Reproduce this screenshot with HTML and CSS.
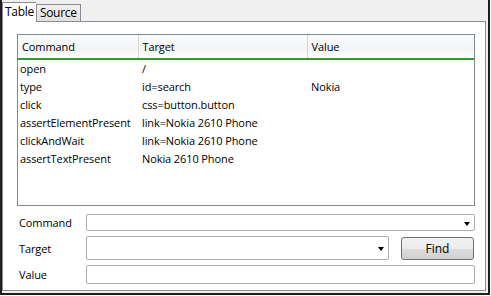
FILE: index.html
```html
<!DOCTYPE html>
<html lang="en">
<head>
    <meta charset="UTF-8">
    <title>Selenium IDE</title>
    <link rel="stylesheet" href="styles.css">
</head>
<body>
    <div class="frame">
        <div class="tabs">
            <div class="tab active">Table</div>
            <div class="tab">Source</div>
        </div>
        <div class="panel">
            <div class="grid">
                <table class="commands">
                    <thead>
                        <tr>
                            <th class="col-cmd">Command</th>
                            <th class="col-target">Target</th>
                            <th class="col-value">Value</th>
                        </tr>
                    </thead>
                    <tbody>
                        <tr><td>open</td><td>/</td><td></td></tr>
                        <tr><td>type</td><td>id=search</td><td>Nokia</td></tr>
                        <tr><td>click</td><td>css=button.button</td><td></td></tr>
                        <tr><td>assertElementPresent</td><td>link=Nokia 2610 Phone</td><td></td></tr>
                        <tr><td>clickAndWait</td><td>link=Nokia 2610 Phone</td><td></td></tr>
                        <tr><td>assertTextPresent</td><td>Nokia 2610 Phone</td><td></td></tr>
                    </tbody>
                </table>
            </div>
            <div class="editor">
                <div class="row row-cmd">
                    <label>Command</label>
                    <div class="field combo"><span class="arrow"></span></div>
                </div>
                <div class="row row-target">
                    <label>Target</label>
                    <div class="field combo"><span class="arrow"></span></div>
                    <button class="find">Find</button>
                </div>
                <div class="row row-value">
                    <label>Value</label>
                    <div class="field"></div>
                </div>
            </div>
        </div>
    </div>
</body>
</html>
```

FILE: styles.css
```css
* {
    box-sizing: border-box;
}

body {
    margin: 0;
    font-family: "Open Sans", "Liberation Sans", sans-serif;
    font-size: 11px;
    letter-spacing: -0.1px;
    color: #000;
    background: #fff;
}

.frame {
    width: 490px;
    height: 295px;
    background: #f0f0f0;
    border-left: 2px solid #1e1e1e;
    border-right: 2px solid #1e1e1e;
    border-bottom: 2px solid #1e1e1e;
    display: flex;
    flex-direction: column;
}

/* tab strip */
.tabs {
    display: flex;
    align-items: flex-end;
    height: 21px;
}

.tab {
    height: 17px;
    padding: 0 3px;
    line-height: 16px;
    border: 1px solid #898c95;
    border-bottom: none;
    background: linear-gradient(#f2f2f2, #e0e0e0);
    font-size: 12px;
    letter-spacing: -0.3px;
}

.tab.active {
    height: 20px;
    line-height: 18px;
    padding: 0 2px;
    background: #fff;
    position: relative;
    top: 1px;
    z-index: 1;
    border-right: none;
}

.panel {
    flex: 1;
    background: #fff;
    border: 1px solid #898c95;
    margin-right: 2px;
    margin-bottom: 2px;
    padding: 12px 10px 0 14px;
}

/* command grid */
.grid {
    height: 172px;
    border: 1px solid #828790;
    background: #fff;
}

.commands {
    border-collapse: collapse;
    width: 100%;
}

.commands th {
    height: 24px;
    font-weight: normal;
    text-align: left;
    padding: 0 4px;
    background: linear-gradient(#f9fafb 0%, #f3f4f5 60%, #fdfdfd 100%);
    border-right: 1px solid #d5d5d5;
    border-bottom: 2px solid #2f9a2f;
}

.commands th.col-value {
    border-right: none;
}

.commands .col-cmd {
    width: 120px;
}

.commands .col-target {
    width: 169px;
}

.commands td {
    height: 18px;
    padding: 0 2px;
    white-space: nowrap;
}

.commands td:nth-child(2),
.commands td:nth-child(3) {
    padding-left: 4px;
}

/* editor fields */
.editor {
    padding-top: 8px;
}

.row {
    display: flex;
    align-items: center;
    margin-bottom: 5px;
}

.row label {
    width: 69px;
    padding-left: 2px;
}

.field {
    flex: 1;
    height: 17px;
    border: 1px solid #abadb3;
    border-radius: 2px;
    position: relative;
    background: #fff;
}

.row-target .field {
    flex: none;
    width: 303px;
    height: 24px;
}

.row-value .field {
    height: 19px;
}

.arrow {
    position: absolute;
    right: 4px;
    top: 50%;
    margin-top: -1px;
    border-left: 3px solid transparent;
    border-right: 3px solid transparent;
    border-top: 4px solid #000;
}

.find {
    margin-left: 12px;
    width: 73px;
    height: 23px;
    font-family: inherit;
    font-size: 12px;
    color: #000;
    border: 1px solid #707070;
    border-radius: 3px;
    background: linear-gradient(#f2f2f2 0%, #ebebeb 50%, #dddddd 51%, #cfcfcf 100%);
    padding: 0;
}
```
